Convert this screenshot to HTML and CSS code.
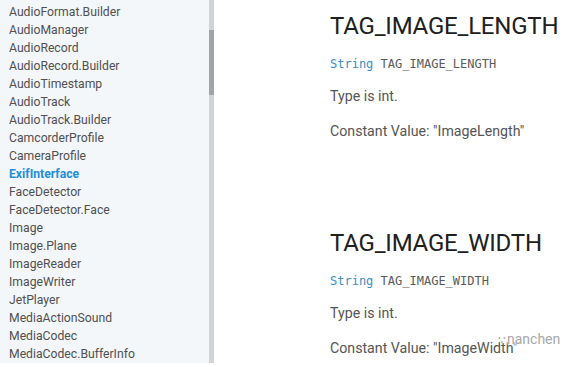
FILE: index.html
```html
<!DOCTYPE html>
<html lang="en">
<head>
  <meta charset="UTF-8" />
  <meta name="viewport" content="width=device-width, initial-scale=1.0" />
  <title>ExifInterface</title>
  <link rel="stylesheet" href="styles.css">
</head>
<body>
  <nav class="sidebar">
    <ul class="nav-list">
      <li>AudioFormat.Builder</li>
      <li>AudioManager</li>
      <li>AudioRecord</li>
      <li>AudioRecord.Builder</li>
      <li>AudioTimestamp</li>
      <li>AudioTrack</li>
      <li>AudioTrack.Builder</li>
      <li>CamcorderProfile</li>
      <li>CameraProfile</li>
      <li class="current">ExifInterface</li>
      <li>FaceDetector</li>
      <li>FaceDetector.Face</li>
      <li>Image</li>
      <li>Image.Plane</li>
      <li>ImageReader</li>
      <li>ImageWriter</li>
      <li>JetPlayer</li>
      <li>MediaActionSound</li>
      <li>MediaCodec</li>
      <li>MediaCodec.BufferInfo</li>
    </ul>
  </nav>
  <div class="scrollbar"><div class="thumb"></div></div>

  <main class="content">
    <section class="field">
      <h3>TAG_IMAGE_LENGTH</h3>
      <p class="sig"><span class="type">String</span> TAG_IMAGE_LENGTH</p>
      <p>Type is int.</p>
      <p>Constant Value: "ImageLength"</p>
    </section>
    <section class="field">
      <h3>TAG_IMAGE_WIDTH</h3>
      <p class="sig"><span class="type">String</span> TAG_IMAGE_WIDTH</p>
      <p>Type is int.</p>
      <p>Constant Value: "ImageWidth"</p>
    </section>
  </main>

  <div class="watermark"><span class="dots">&#x2235;</span>nanchen</div>
</body>
</html>
```

FILE: styles.css
```css
body {
  margin: 0;
  display: flex;
  height: 367px;
  overflow: hidden;
  font-family: Roboto, "Liberation Sans", sans-serif;
  background: white;
  color: #555;
}
.sidebar {
  width: 209px;
  height: 363px;
  background: #f4f7fa;
}
.nav-list {
  list-style: none;
  margin: 0;
  padding: 3px 0 0 9px;
  font-size: 12.2px;
  line-height: 18px;
  color: #505050;
}
.nav-list .current {
  color: #1e8fdb;
  font-weight: bold;
}
.scrollbar {
  width: 5px;
  height: 363px;
  background: #cfd4d9;
}
.thumb {
  margin-top: 30px;
  height: 65px;
  background: #a0a4a8;
}
.content {
  padding: 10px 0 0 116px;
}
.field {
  margin-bottom: 86px;
}
.field h3 {
  margin: 0;
  font-size: 24px;
  font-weight: 400;
  line-height: 32px;
  color: #202020;
  letter-spacing: -0.2px;
}
.field p {
  margin: 0;
  font-size: 14.2px;
  line-height: 20px;
  margin-top: 15px;
}
.field .sig {
  margin-top: 14px;
  font-family: "DejaVu Sans Mono", "Liberation Mono", monospace;
  font-size: 12px;
  line-height: 16px;
  color: #5a5a5a;
}
.sig + p {
  margin-top: 14px;
}
.sig .type {
  color: #3d8ec6;
}
.watermark {
  position: absolute;
  left: 498px;
  top: 331px;
  font-size: 14px;
  color: #a8a8a8;
  text-shadow: 0 0 2px white, 0 0 3px white, 0 0 4px white;
}
.dots {
  font-size: 12px;
  margin-right: 1px;
}
```
